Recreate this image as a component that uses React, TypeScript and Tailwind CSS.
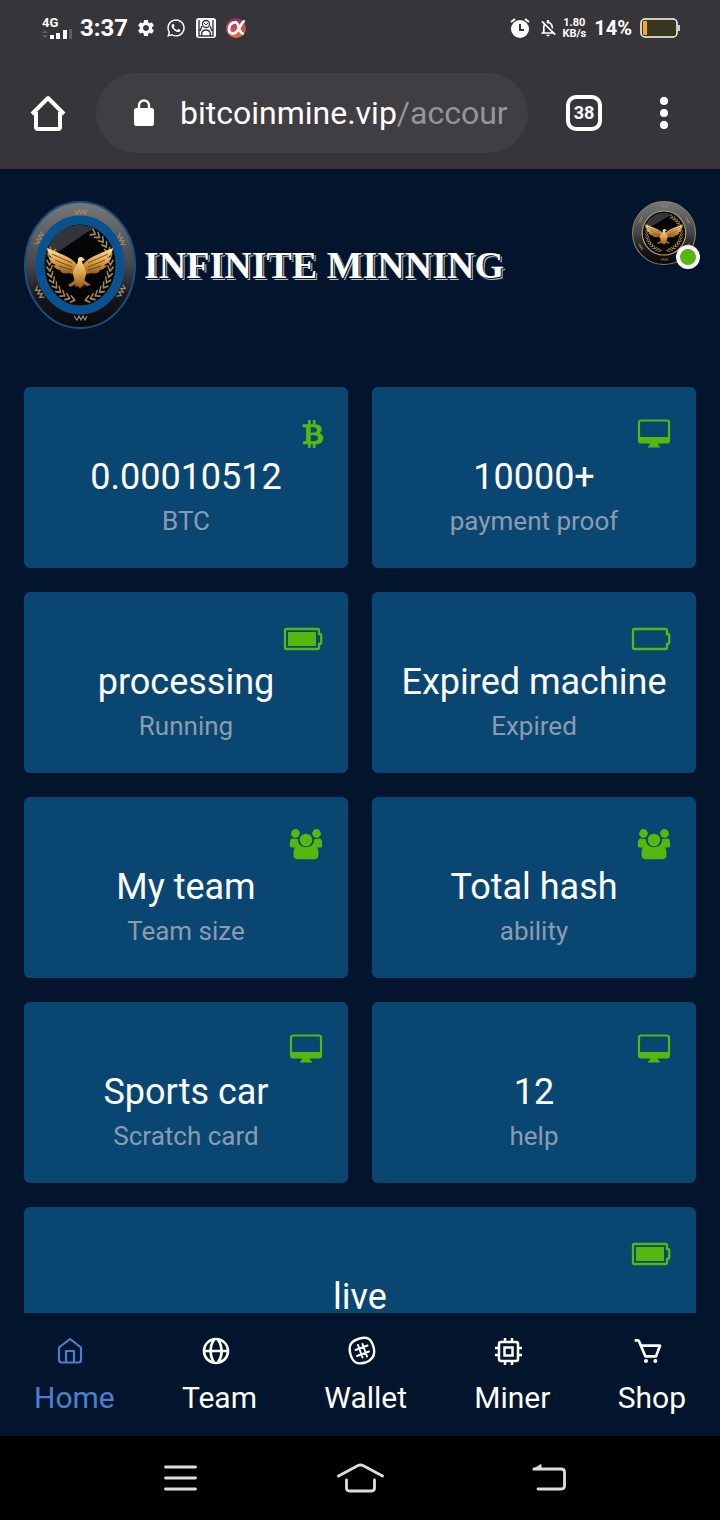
import type { ReactNode } from "react";
import { BiCart, BiGlobe } from "react-icons/bi";
import { FaBtc, FaWhatsapp } from "react-icons/fa";
import { MdOutlineNotificationsOff, MdSettings } from "react-icons/md";

type CardIcon = "btc" | "desktop" | "batteryFull" | "batteryEmpty" | "users";

interface StatCard {
  title: string;
  label?: string;
  icon: CardIcon;
  wide?: boolean;
}

const CARDS: StatCard[] = [
  { title: "0.00010512", label: "BTC", icon: "btc" },
  { title: "10000+", label: "payment proof", icon: "desktop" },
  { title: "processing", label: "Running", icon: "batteryFull" },
  { title: "Expired machine", label: "Expired", icon: "batteryEmpty" },
  { title: "My team", label: "Team size", icon: "users" },
  { title: "Total hash", label: "ability", icon: "users" },
  { title: "Sports car", label: "Scratch card", icon: "desktop" },
  { title: "12", label: "help", icon: "desktop" },
  { title: "live", icon: "batteryFull", wide: true },
];

function DesktopIcon() {
  return (
    <svg width="34" height="30" viewBox="0 0 34 30" fill="none">
      <rect x="2" y="1.500" width="30" height="22" rx="2" stroke="currentColor" strokeWidth="2.200" />
      <path d="M2 18h30v4a2 2 0 0 1-2 2H4a2 2 0 0 1-2-2z" fill="currentColor" />
      <path d="M13 23h8l.4 3.500 1.600 1v1H11v-1l1.600-1z" fill="currentColor" />
    </svg>
  );
}

function BatteryIcon({ full = false }: { full?: boolean }) {
  return (
    <svg width="40" height="24" viewBox="0 0 40 24" fill="none">
      <path
        d="M3.500 2h31a1.500 1.500 0 0 1 1.500 1.500V7h1a1.200 1.200 0 0 1 1.200 1.200v7.600A1.200 1.200 0 0 1 37 17h-1v3.500a1.500 1.500 0 0 1-1.500 1.500h-31A1.500 1.500 0 0 1 2 20.500v-17A1.500 1.500 0 0 1 3.500 2z"
        stroke="currentColor"
        strokeWidth="2.300"
      />
      {full && <path d="M5 5h28v14H5z" fill="currentColor" />}
    </svg>
  );
}

function UsersIcon() {
  return (
    <svg width="34" height="32" viewBox="0 0 34 32" fill="currentColor">
      <circle cx="6.500" cy="5.500" r="4.400" />
      <circle cx="27.500" cy="5.500" r="4.400" />
      <path d="M3.500 10.500C1.500 10.500.8 12.500.8 17.500c0 1.500 1 2 2.400 2h8v-8zM30.500 10.500c2 0 2.700 2 2.700 7 0 1.500-1 2-2.400 2h-8v-8z" />
      <circle cx="17" cy="12" r="8" className="fill-[#0a4672]" />
      <path d="M10 17C5.500 17 4.500 21.500 4.500 27c0 3 1.800 4.300 4.500 4.300h16c2.700 0 4.500-1.300 4.500-4.300 0-5.500-1-10-5.500-10-1 0-3 2.200-7 2.200S11 17 10 17z" />
      <circle cx="17" cy="12" r="6.300" />
    </svg>
  );
}

const CARD_ICONS: Record<CardIcon, ReactNode> = {
  btc: <FaBtc size={28} className="-mr-1" />,
  desktop: <DesktopIcon />,
  batteryFull: <BatteryIcon full />,
  batteryEmpty: <BatteryIcon />,
  users: <UsersIcon />,
};

function Wing() {
  return (
    <g>
      <path
        d="M55 67C51 58 42 55 23 47c1 6 3 8 6 10-2 0-3 0-4-1 1 5 4 7 7 8-1 1-2 0-3 0 2 4 5 5 8 5l-1 1c3 3 6 3 8 2l8 2z"
        fill="url(#gold)"
      />
      <path d="M28 53l20 9M31 59l17 7M35 65l13 4" stroke="#6d4310" strokeWidth="0.900" />
    </g>
  );
}

const RIM_MARKS = [
  "translate(56 11)",
  "translate(15 38) rotate(-65)",
  "translate(97 38) rotate(65)",
  "translate(15 91) rotate(60)",
  "translate(97 91) rotate(-60)",
  "translate(56 117)",
];

// degrees away from the foot of the wreath
const LEAVES = [10, 20, 30, 40, 50, 60, 70, 80, 90, 100, 110, 120, 130, 140, 150];

function Emblem({ className, blue = false }: { className: string; blue?: boolean }) {
  return (
    <svg className={className} viewBox="0 0 112 128" preserveAspectRatio="none" fill="none">
      <defs>
        <linearGradient id="rim" x1="0" y1="0" x2="0" y2="1">
          <stop offset="0" stopColor="#77787c" />
          <stop offset="0.5" stopColor="#45464b" />
          <stop offset="0.75" stopColor="#17181d" />
          <stop offset="1" stopColor="#08090d" />
        </linearGradient>
        <linearGradient id="gold" x1="0" y1="0" x2="0" y2="1">
          <stop offset="0" stopColor="#fbe3a4" />
          <stop offset="0.5" stopColor="#dca348" />
          <stop offset="1" stopColor="#8b5417" />
        </linearGradient>
      </defs>
      <ellipse cx="56" cy="64" rx="55" ry="63" fill="url(#rim)" stroke={blue ? "#164f80" : "#8f8157"} strokeWidth="2" />
      <ellipse
        cx="56"
        cy="64"
        rx={blue ? 40 : 38}
        ry={blue ? 45 : 44}
        fill="#040507"
        stroke={blue ? "#09528d" : "#b9a566"}
        strokeWidth={blue ? 9 : 2}
      />
      <path d="M22 56C26 34 40 24 55 24c7 0 12 1 16 4-14 4-24 18-49 28z" fill="#34353a" />
      {RIM_MARKS.map((transform) => (
        <path key={transform} transform={transform} d="M-6-2l3 4 2-4 2 4 2-4 2 4 2-4" stroke="#a08a60" strokeWidth="1.200" />
      ))}
      <g stroke="#a88a4e" strokeWidth="1.500" strokeLinecap="round">
        {LEAVES.map((angle) => (
          <path
            key={`right-${angle}`}
            transform={`translate(56 64) scale(1 1.170) rotate(${-angle})`}
            d="M0 30.500l4-3M0 30.500l4 2.500"
          />
        ))}
        {LEAVES.slice(0, 11).map((angle) => (
          <path
            key={`left-${angle}`}
            transform={`translate(56 64) scale(-1 1.170) rotate(${-angle})`}
            d="M0 30.500l4-3M0 30.500l4 2.500"
          />
        ))}
      </g>
      <Wing />
      <g transform="translate(112 0) scale(-1 1)">
        <Wing />
      </g>
      <path
        d="M54 59c-1-3 4-4 5-2l2 2-3 1c0 3 4 7 4 12 0 4-2 6-1 8l6 4-4 1-4-2 1 3-2-1-2 3-2-3-3 1 1-3-6 3-2-2 6-4c1-2-1-4-1-8 0-5 5-8 5-13z"
        fill="url(#gold)"
      />
    </svg>
  );
}

function StatusBar() {
  return (
    <div className="flex h-14 items-center justify-between pr-10 pl-[42px] text-white">
      <div className="flex items-center gap-2">
        <div className="flex w-[30px] flex-col">
          <span className="text-[13px] leading-3 font-bold">4G</span>
          <svg width="32" height="10" viewBox="0 0 32 10" fill="currentColor">
            <path d="M0 4l3-3 3 3zM0 6l3 3 3-3z" opacity="0.2" />
            <path d="M8 6h4v4H8zM14 4h4v6h-4zM21 1h4v9h-4z" />
            <path d="M27 0h3v10h-3z" opacity="0.2" />
          </svg>
        </div>
        <span className="text-2xl font-bold">3:37</span>
        <div className="flex items-center gap-[10px]">
          <MdSettings size={20} />
          <FaWhatsapp size={20} />
          <svg width="20" height="20" viewBox="0 0 20 20" fill="none">
            <rect width="20" height="20" rx="3" fill="#fff" />
            <path d="M3 2v16h14V2M6 18c-1-3 0-6 4-6s5 3 4 6M6 8l-2 5M14 8l2 5" stroke="#36353a" strokeWidth="1.400" />
            <circle cx="10" cy="6" r="3.500" stroke="#36353a" strokeWidth="1.300" />
            <path d="M8 5l2 2 2-2" stroke="#36353a" />
          </svg>
          <span className="flex size-5 items-center justify-center rounded-full bg-linear-to-b from-[#a02468] to-[#f0701f]">
            <svg width="20" height="20" viewBox="0 0 18 18" fill="none" stroke="#fff" strokeWidth="2.400" strokeLinecap="round">
              <path d="M16 3c-3 2-5 11-9.500 11C3 14 2 11 3 8s3-4 5.500-4C12 4 11 13 15 14" />
            </svg>
          </span>
        </div>
      </div>
      <div className="flex items-center gap-2">
        <svg width="20" height="22" viewBox="0 0 20 22" fill="none">
          <circle cx="10" cy="12" r="9" fill="#fff" />
          <path d="M1 5l4-3M19 5l-4-3" stroke="#fff" strokeWidth="2" />
          <path d="M10 7v6h4" stroke="#36353a" strokeWidth="2" />
        </svg>
        <MdOutlineNotificationsOff size={20} className="-mr-1" />
        <span className="w-6 text-center text-[11px] leading-[11px] font-bold">
          1.80
          <br />
          KB/s
        </span>
        <span className="text-xl font-bold">14%</span>
        <svg width="40" height="20" viewBox="0 0 40 20" fill="none">
          <rect x="1" y="1" width="36" height="18" rx="4" fill="#36351d" stroke="#fff" strokeWidth="1.500" />
          <path d="M3 3h4v14H3z" fill="#f5a623" />
          <path d="M39 7v6" stroke="#fff" strokeWidth="1.500" />
        </svg>
      </div>
    </div>
  );
}

function BrowserBar() {
  return (
    <div className="flex items-center pt-[17px] pr-[38px] pb-4 pl-[30px] text-white">
      <button type="button" aria-label="Home page" className="mr-[30px] shrink-0">
        <svg width="36" height="36" viewBox="0 0 36 36" fill="none" stroke="currentColor" strokeWidth="4" strokeLinejoin="round">
          <path d="M2 19L18 3l16 16M6 17v15a2 2 0 0 0 2 2h20a2 2 0 0 0 2-2V17" />
        </svg>
      </button>
      <button type="button" className="mr-[38px] flex h-20 min-w-0 flex-1 items-center overflow-hidden rounded-full bg-[#3f3e43] pr-5 pl-[38px]">
        <svg width="20" height="28" viewBox="0 0 20 28" fill="none" className="mr-[26px] shrink-0">
          <path d="M5 11V6.500a5 5 0 0 1 10 0V11" stroke="#fff" strokeWidth="2.400" />
          <rect y="9" width="20" height="18" rx="2.500" fill="#fff" />
        </svg>
        <span className="text-[32px] leading-10 whitespace-nowrap">
          bitcoinmine.vip<span className="text-[#96959a]">/accour</span>
        </span>
      </button>
      <button
        type="button"
        aria-label="38 open tabs"
        className="mr-11 flex size-9 shrink-0 items-center justify-center rounded-[10px] border-4 border-white text-lg font-bold"
      >
        38
      </button>
      <button type="button" aria-label="Menu" className="flex w-9 shrink-0 flex-col items-center gap-1">
        <span className="size-2 rounded-full bg-white" />
        <span className="size-2 rounded-full bg-white" />
        <span className="size-2 rounded-full bg-white" />
      </button>
    </div>
  );
}

function Card({ card }: { card: StatCard }) {
  return (
    <section className={card.wide ? "col-span-2 rounded-md bg-[#0a4672] pt-[27px] pb-[26px]" : "rounded-md bg-[#0a4672] pt-[27px] pb-[26px]"}>
      <div className="flex h-10 items-center justify-end pr-[25px] text-[#55b80f]">{CARD_ICONS[card.icon]}</div>
      <h2 className="text-center text-4xl leading-[46px] whitespace-nowrap text-white">{card.title}</h2>
      <p className="h-[42px] text-center text-[26px] leading-[42px] text-[#8b9cae]">{card.label}</p>
    </section>
  );
}

const NAV_ITEMS = [
  {
    label: "Home",
    icon: (
      <svg width="32" height="32" viewBox="0 0 32 32" fill="none" stroke="currentColor" strokeWidth="2.200" strokeLinejoin="round">
        <path d="M5 12.500L16 4l11 8.500V25a2.500 2.500 0 0 1-2.500 2.500h-17A2.500 2.500 0 0 1 5 25z" />
        <path d="M12 27.500V16h8v11.500" />
      </svg>
    ),
  },
  { label: "Team", icon: <BiGlobe size={32} /> },
  {
    label: "Wallet",
    icon: (
      <svg width="32" height="32" viewBox="0 0 32 32" fill="none" stroke="currentColor" strokeLinecap="round">
        <path
          d="M13.500 3.500c8-2 11.500 0 14 8.500 2.300 8-.5 12.500-8 15.500-8.500 2.300-12.500.2-15-8C2.100 11 4.500 6 13.500 3.500z"
          strokeWidth="2.400"
        />
        <path d="M12 10l4.500 12.500M16.500 9L21 21.500M9.500 15l12-4.500M11 21l12-4.500" strokeWidth="2" />
      </svg>
    ),
  },
  {
    label: "Miner",
    icon: (
      <svg width="32" height="32" viewBox="0 0 32 32" fill="none" stroke="currentColor" strokeWidth="2.500">
        <rect x="7" y="7" width="19" height="19" rx="2" />
        <rect x="12.500" y="12.500" width="8" height="8" />
        <path d="M13 3v4M20 3v4M13 26v4M20 26v4M3 13h4M3 20h4M26 13h4M26 20h4" />
      </svg>
    ),
  },
  { label: "Shop", icon: <BiCart size={32} /> },
];

function BottomNav() {
  return (
    <nav className="flex shrink-0 justify-between bg-[#03152d] px-[34px] pt-[22px] pb-5">
      {NAV_ITEMS.map((item, index) => (
        <a
          key={item.label}
          href="#"
          className={index === 0 ? "flex flex-col items-center gap-3 text-[#4c7fd0]" : "flex flex-col items-center gap-3 text-white"}
        >
          <span className="pr-2">{item.icon}</span>
          <span className="text-3xl leading-[37px]">{item.label}</span>
        </a>
      ))}
    </nav>
  );
}

function SystemNav() {
  return (
    <div className="flex h-21 shrink-0 items-center justify-between bg-black pr-[154px] pl-[164px] text-[#dedede]">
      <button type="button" aria-label="Recent apps">
        <svg width="33" height="30" viewBox="0 0 33 30" stroke="currentColor" strokeWidth="2.800" strokeLinecap="round">
          <path d="M1.500 4h30M1.500 15h30M1.500 26h30" />
        </svg>
      </button>
      <button type="button" aria-label="Home">
        <svg width="47" height="30" viewBox="0 0 47 30" fill="none" stroke="currentColor" strokeWidth="2.800" strokeLinecap="round">
          <path d="M1.500 13L21 2.500q2.500-1 5 0L45.500 13M9.500 17v8q0 3 3 3h22q3 0 3-3v-8" />
        </svg>
      </button>
      <button type="button" aria-label="Back">
        <svg width="42" height="30" viewBox="0 0 42 30" fill="none" stroke="currentColor" strokeWidth="2.800" strokeLinecap="round">
          <path d="M10 6h27q3.500 0 3.500 3v14q0 3-3.500 3H14" />
          <path d="M9 6.500l8-5V6z" fill="currentColor" strokeWidth="1" />
        </svg>
      </button>
    </div>
  );
}

export default function App() {
  return (
    <div className="flex h-screen flex-col overflow-hidden bg-[#03152d] font-[Roboto,'Liberation_Sans',sans-serif]">
      <header className="shrink-0 bg-[#36353a]">
        <StatusBar />
        <BrowserBar />
      </header>

      <main className="min-h-0 flex-1 overflow-hidden px-6 pt-8">
        <div className="mb-[58px] flex items-start justify-between">
          <a href="#" className="flex items-center gap-2">
            <Emblem className="h-32 w-28" blue />
            <span className="font-['Liberation_Serif',serif] text-[38px] leading-12 font-bold whitespace-nowrap text-white [text-shadow:1px_1px_0_#03152d,2px_2px_0_#b4b8bf]">
              INFINITE MINNING
            </span>
          </a>
          <button type="button" aria-label="Profile" className="relative">
            <Emblem className="size-16" />
            <span className="absolute -right-1 -bottom-1 size-6 rounded-full border-4 border-white bg-[#55b80f]" />
          </button>
        </div>

        <div className="grid grid-cols-2 gap-6">
          {CARDS.map((card) => (
            <Card key={card.title} card={card} />
          ))}
        </div>
      </main>

      <BottomNav />
      <SystemNav />
    </div>
  );
}
